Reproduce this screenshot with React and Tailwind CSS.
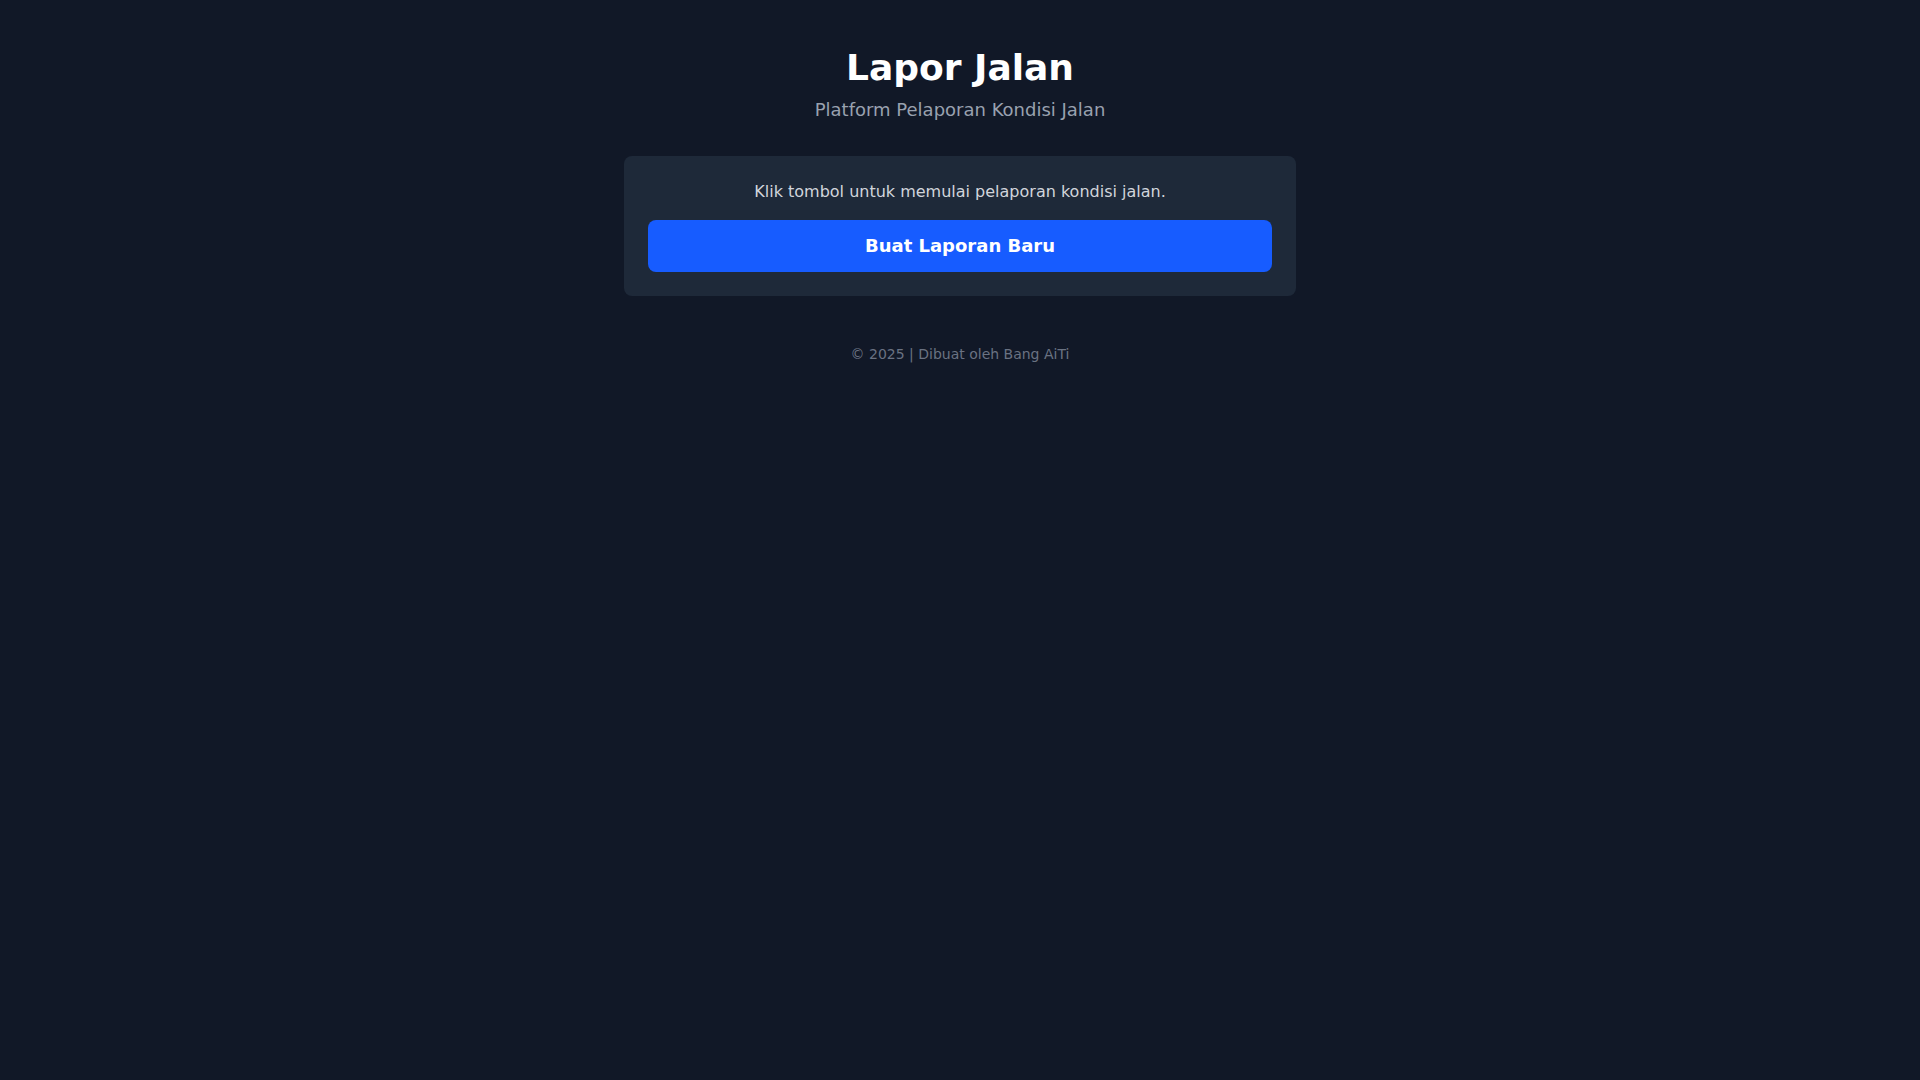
export default function App() {
  return (
    <div className="min-h-screen bg-[#111827] text-white py-12 px-4" style={{ fontFamily: '"DejaVu Sans", sans-serif' }}>
      <header className="text-center mb-8">
        <h1 className="text-4xl font-bold">Lapor Jalan</h1>
        <p className="mt-2 text-lg text-gray-400">Platform Pelaporan Kondisi Jalan</p>
      </header>

      <main className="max-w-2xl mx-auto bg-gray-800 rounded-lg p-6 text-center">
        <p className="text-gray-300 mb-4">Klik tombol untuk memulai pelaporan kondisi jalan.</p>
        <button className="w-full py-3 rounded-lg bg-[#175cff] text-white text-lg font-bold">
          Buat Laporan Baru
        </button>
      </main>

      <footer className="mt-12 text-center text-sm text-gray-500">
        © 2025 | Dibuat oleh Bang AiTi
      </footer>
    </div>
  )
}
